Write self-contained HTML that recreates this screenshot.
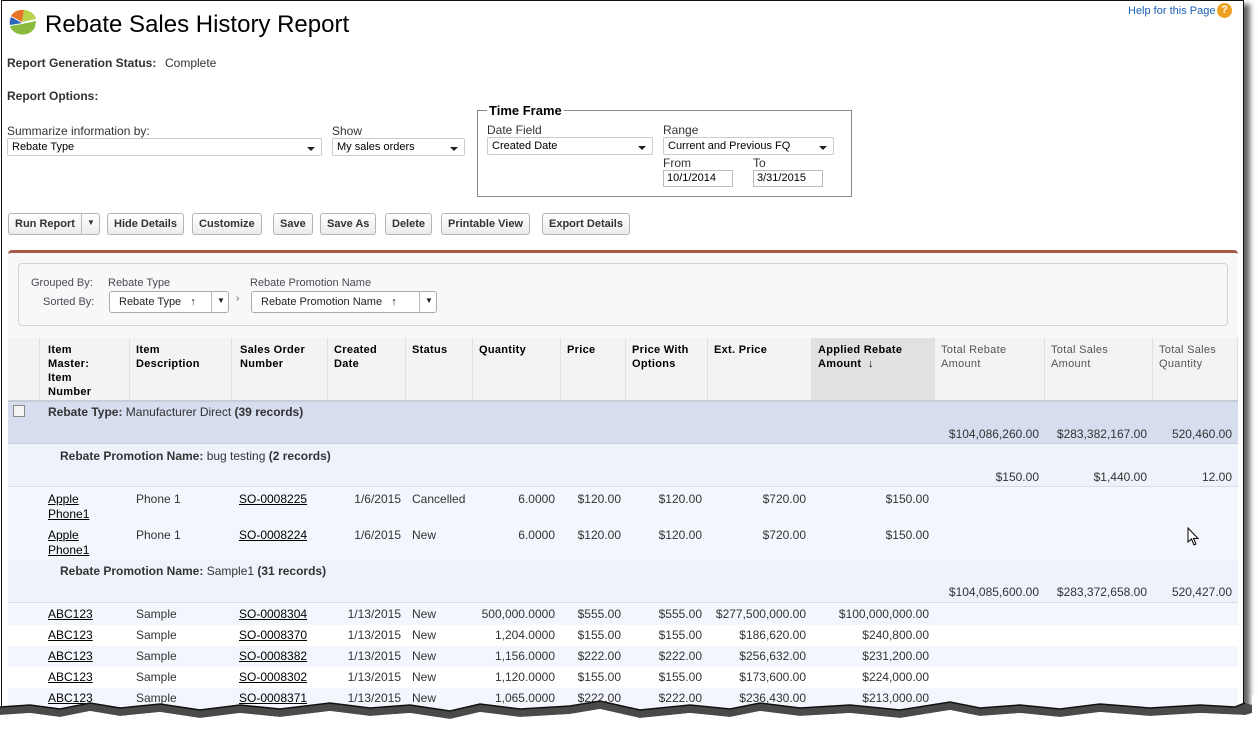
<!DOCTYPE html>
<html><head><meta charset="utf-8">
<style>
*{margin:0;padding:0;box-sizing:border-box}
body{width:1258px;height:733px;background:#fff;font-family:"Liberation Sans",Arial,sans-serif;font-size:12px;color:#333;position:relative;overflow:hidden}
.a{position:absolute;white-space:nowrap}
.frame{position:absolute;left:1px;top:0;width:1243px;height:720px;border:1px solid #111;border-bottom:none;background:#fff;box-shadow:6px 4px 5px #666}
.b{font-weight:bold;color:#333}
.sel{position:absolute;height:18px;border:1px solid #ccc;background:#fff;font-size:11px;color:#000;padding:2px 4px;border-radius:2px}
.sel:after{content:"";position:absolute;right:6px;top:8px;border-left:4px solid transparent;border-right:4px solid transparent;border-top:4px solid #222}
.btn{position:absolute;top:213px;height:22px;border:1px solid #b5b5b5;border-radius:3px;background:linear-gradient(#fff,#ececec);font-weight:bold;font-size:11px;color:#333;padding:4px 6px;white-space:nowrap}
.inp{position:absolute;height:17px;border:1px solid #bbb;font-size:11px;color:#000;padding:1px 3px;background:#fff}
.h{position:absolute;top:338px;height:63px;font-size:11px;font-weight:bold;color:#000;padding:5px 6px;line-height:14px;border-right:1px solid #e0e0e0;background:#f2f3f3;letter-spacing:0.3px}
.hn{font-weight:normal;color:#555}
.row{position:absolute;left:8px;width:1230px}
.c{position:absolute;font-size:12px;color:#333;white-space:nowrap}
.r{text-align:right}
u{color:#000}
</style></head><body>
<div class="frame"></div>
<svg class="a" style="left:7px;top:7px" width="32" height="32" viewBox="0 0 32 32">
<path d="M15 15 L4 9 A13 13 0 0 1 17 3 Z" fill="#e8742a"/>
<path d="M15 15 L17 3 A13 12 0 0 1 29 12 Z" fill="#b8d24a"/>
<path d="M15 16 L4 10 A13 13 0 0 0 3 18 Z" fill="#2b64b8"/>
<path d="M15 17 L3 19 A13 11 0 0 0 28 20 L29 14 Z" fill="#8bbb3c"/>
</svg>
<div class="a" style="left:45px;top:11px;font-size:24px;color:#000">Rebate Sales History Report</div>
<div class="a" style="left:1128px;top:5px;font-size:11px;color:#1a5fb4">Help for this Page</div>
<div class="a" style="left:1217px;top:3px;width:15px;height:15px;border-radius:50%;background:#f0a020;color:#fff;font-weight:bold;font-size:11px;text-align:center;line-height:15px">?</div>

<div class="a b" style="left:7px;top:56px;font-size:12px">Report Generation Status:</div>
<div class="a" style="left:165px;top:56px;font-size:12px">Complete</div>
<div class="a b" style="left:7px;top:89px">Report Options:</div>

<div class="a" style="left:7px;top:124px;font-size:12px">Summarize information by:</div>
<div class="sel" style="left:7px;top:138px;width:315px">Rebate Type</div>
<div class="a" style="left:332px;top:124px">Show</div>
<div class="sel" style="left:332px;top:138px;width:133px">My sales orders</div>

<div class="a" style="left:477px;top:110px;width:375px;height:87px;border:1px solid #888"></div>
<div class="a" style="left:487px;top:103px;background:#fff;padding:0 2px;font-weight:bold;font-size:13px;color:#000">Time Frame</div>
<div class="a" style="left:487px;top:123px">Date Field</div>
<div class="sel" style="left:487px;top:137px;width:166px">Created Date</div>
<div class="a" style="left:663px;top:123px">Range</div>
<div class="sel" style="left:663px;top:137px;width:171px">Current and Previous FQ</div>
<div class="a" style="left:663px;top:156px">From</div>
<div class="a" style="left:753px;top:156px">To</div>
<div class="inp" style="left:663px;top:170px;width:70px">10/1/2014</div>
<div class="inp" style="left:753px;top:170px;width:70px">3/31/2015</div>

<div class="btn" style="left:8px;width:92px">Run Report <span style="position:absolute;left:72px;top:0;height:20px;border-left:1px solid #bbb;padding:4px 0 0 5px;font-size:8px">▼</span></div>
<div class="btn" style="left:107px">Hide Details</div>
<div class="btn" style="left:192px">Customize</div>
<div class="btn" style="left:273px">Save</div>
<div class="btn" style="left:320px">Save As</div>
<div class="btn" style="left:385px">Delete</div>
<div class="btn" style="left:441px">Printable View</div>
<div class="btn" style="left:542px">Export Details</div>

<div class="a" style="left:8px;top:250px;width:1230px;height:470px;background:#f8f8f8;border-top:3px solid #a85a4a;border-radius:4px 4px 0 0"></div>
<div class="a" style="left:18px;top:263px;width:1210px;height:63px;border:1px solid #d4d4d4;border-radius:4px;background:#f8f8f8"></div>
<div class="a" style="left:31px;top:277px;font-size:11px;color:#4a4a56">Grouped By:</div>
<div class="a" style="left:108px;top:277px;font-size:11px;color:#4a4a56">Rebate Type</div>
<div class="a" style="left:250px;top:277px;font-size:11px;color:#4a4a56">Rebate Promotion Name</div>
<div class="a" style="left:43px;top:296px;font-size:11px;color:#4a4a56">Sorted By:</div>
<div class="a" style="left:109px;top:291px;width:120px;height:22px;border:1px solid #aaa;border-radius:3px;background:#fff;font-size:11px;color:#222;padding:4px 9px">Rebate Type &nbsp;&nbsp;↑<span style="position:absolute;left:101px;top:0;height:20px;border-left:1px solid #bbb;padding:4px 0 0 5px;font-size:8px">▼</span></div>
<div class="a" style="left:236px;top:293px;font-size:10px;color:#555">›</div>
<div class="a" style="left:251px;top:291px;width:186px;height:22px;border:1px solid #aaa;border-radius:3px;background:#fff;font-size:11px;color:#222;padding:4px 9px">Rebate Promotion Name &nbsp;&nbsp;↑<span style="position:absolute;left:167px;top:0;height:20px;border-left:1px solid #bbb;padding:4px 0 0 5px;font-size:8px">▼</span></div>

<div class="h" style="left:8px;width:32px"></div>
<div class="h" style="left:40px;width:90px;padding-left:8px">Item<br>Master:<br>Item<br>Number</div>
<div class="h" style="left:130px;width:102px">Item<br>Description</div>
<div class="h" style="left:232px;width:96px;padding-left:8px">Sales Order<br>Number</div>
<div class="h" style="left:328px;width:78px">Created<br>Date</div>
<div class="h" style="left:406px;width:67px">Status</div>
<div class="h" style="left:473px;width:88px">Quantity</div>
<div class="h" style="left:561px;width:65px">Price</div>
<div class="h" style="left:626px;width:82px">Price With<br>Options</div>
<div class="h" style="left:708px;width:104px">Ext. Price</div>
<div class="h" style="left:812px;width:123px;background:#dfe1e3">Applied Rebate<br>Amount &nbsp;↓</div>
<div class="h hn" style="left:935px;width:110px">Total Rebate<br>Amount</div>
<div class="h hn" style="left:1045px;width:108px">Total Sales<br>Amount</div>
<div class="h hn" style="left:1153px;width:85px">Total Sales<br>Quantity</div>
<div class="a" style="left:8px;top:400px;width:1230px;height:2px;background:#c8ccd6"></div>

<div class="row" style="top:402px;height:42px;background:#d5ddef;border-bottom:1px solid #c8d0e0"></div>
<div class="a" style="left:13px;top:405px;width:12px;height:12px;border:1px solid #888;background:#f4f4f4"></div>
<div class="c" style="left:48px;top:405px"><b>Rebate Type:</b> Manufacturer Direct <b>(39 records)</b></div>
<div class="c r" style="left:900px;width:139px;top:427px">$104,086,260.00</div>
<div class="c r" style="left:1040px;width:107px;top:427px">$283,382,167.00</div>
<div class="c r" style="left:1150px;width:82px;top:427px">520,460.00</div>

<div class="row" style="top:444px;height:43px;background:#eef2fa;border-bottom:1px solid #d8dce6"></div>
<div class="c" style="left:60px;top:449px"><b>Rebate Promotion Name:</b> bug testing <b>(2 records)</b></div>
<div class="c r" style="left:900px;width:139px;top:470px">$150.00</div>
<div class="c r" style="left:1040px;width:107px;top:470px">$1,440.00</div>
<div class="c r" style="left:1150px;width:82px;top:470px">12.00</div>

<div class="row" style="top:488px;height:72px;background:#f3f6fc"></div>
<div class="c" style="left:48px;top:492px;line-height:15px"><u>Apple<br>Phone1</u></div>
<div class="c" style="left:136px;top:492px">Phone 1</div>
<div class="c" style="left:239px;top:492px"><u>SO-0008225</u></div>
<div class="c r" style="left:330px;width:71px;top:492px">1/6/2015</div>
<div class="c" style="left:412px;top:492px">Cancelled</div>
<div class="c r" style="left:470px;width:85px;top:492px">6.0000</div>
<div class="c r" style="left:560px;width:61px;top:492px">$120.00</div>
<div class="c r" style="left:625px;width:77px;top:492px">$120.00</div>
<div class="c r" style="left:705px;width:101px;top:492px">$720.00</div>
<div class="c r" style="left:810px;width:119px;top:492px">$150.00</div>

<div class="c" style="left:48px;top:528px;line-height:15px"><u>Apple<br>Phone1</u></div>
<div class="c" style="left:136px;top:528px">Phone 1</div>
<div class="c" style="left:239px;top:528px"><u>SO-0008224</u></div>
<div class="c r" style="left:330px;width:71px;top:528px">1/6/2015</div>
<div class="c" style="left:412px;top:528px">New</div>
<div class="c r" style="left:470px;width:85px;top:528px">6.0000</div>
<div class="c r" style="left:560px;width:61px;top:528px">$120.00</div>
<div class="c r" style="left:625px;width:77px;top:528px">$120.00</div>
<div class="c r" style="left:705px;width:101px;top:528px">$720.00</div>
<div class="c r" style="left:810px;width:119px;top:528px">$150.00</div>
<svg class="a" style="left:1187px;top:527px" width="14" height="20" viewBox="0 0 14 20"><path d="M1 1 L1 15 L4.5 12 L7 18 L9 17 L6.5 11.5 L11 11.5 Z" fill="#fff" stroke="#000" stroke-width="1"/></svg>

<div class="row" style="top:560px;height:43px;background:#eef2fa;border-bottom:1px solid #d8dce6"></div>
<div class="c" style="left:60px;top:564px"><b>Rebate Promotion Name:</b> Sample1 <b>(31 records)</b></div>
<div class="c r" style="left:900px;width:139px;top:585px">$104,085,600.00</div>
<div class="c r" style="left:1040px;width:107px;top:585px">$283,372,658.00</div>
<div class="c r" style="left:1150px;width:82px;top:585px">520,427.00</div>

<div class="row" style="top:604px;height:21px;background:#f3f6fc"></div>
<div class="row" style="top:625px;height:21px;background:#fff"></div>
<div class="row" style="top:646px;height:21px;background:#f3f6fc"></div>
<div class="row" style="top:667px;height:21px;background:#fff"></div>
<div class="row" style="top:688px;height:32px;background:#f3f6fc"></div>

<div class="c" style="left:48px;top:607px"><u>ABC123</u></div><div class="c" style="left:136px;top:607px">Sample</div><div class="c" style="left:239px;top:607px"><u>SO-0008304</u></div><div class="c r" style="left:330px;width:71px;top:607px">1/13/2015</div><div class="c" style="left:412px;top:607px">New</div><div class="c r" style="left:470px;width:85px;top:607px">500,000.0000</div><div class="c r" style="left:560px;width:61px;top:607px">$555.00</div><div class="c r" style="left:625px;width:77px;top:607px">$555.00</div><div class="c r" style="left:705px;width:101px;top:607px">$277,500,000.00</div><div class="c r" style="left:810px;width:119px;top:607px">$100,000,000.00</div>
<div class="c" style="left:48px;top:628px"><u>ABC123</u></div><div class="c" style="left:136px;top:628px">Sample</div><div class="c" style="left:239px;top:628px"><u>SO-0008370</u></div><div class="c r" style="left:330px;width:71px;top:628px">1/13/2015</div><div class="c" style="left:412px;top:628px">New</div><div class="c r" style="left:470px;width:85px;top:628px">1,204.0000</div><div class="c r" style="left:560px;width:61px;top:628px">$155.00</div><div class="c r" style="left:625px;width:77px;top:628px">$155.00</div><div class="c r" style="left:705px;width:101px;top:628px">$186,620.00</div><div class="c r" style="left:810px;width:119px;top:628px">$240,800.00</div>
<div class="c" style="left:48px;top:649px"><u>ABC123</u></div><div class="c" style="left:136px;top:649px">Sample</div><div class="c" style="left:239px;top:649px"><u>SO-0008382</u></div><div class="c r" style="left:330px;width:71px;top:649px">1/13/2015</div><div class="c" style="left:412px;top:649px">New</div><div class="c r" style="left:470px;width:85px;top:649px">1,156.0000</div><div class="c r" style="left:560px;width:61px;top:649px">$222.00</div><div class="c r" style="left:625px;width:77px;top:649px">$222.00</div><div class="c r" style="left:705px;width:101px;top:649px">$256,632.00</div><div class="c r" style="left:810px;width:119px;top:649px">$231,200.00</div>
<div class="c" style="left:48px;top:670px"><u>ABC123</u></div><div class="c" style="left:136px;top:670px">Sample</div><div class="c" style="left:239px;top:670px"><u>SO-0008302</u></div><div class="c r" style="left:330px;width:71px;top:670px">1/13/2015</div><div class="c" style="left:412px;top:670px">New</div><div class="c r" style="left:470px;width:85px;top:670px">1,120.0000</div><div class="c r" style="left:560px;width:61px;top:670px">$155.00</div><div class="c r" style="left:625px;width:77px;top:670px">$155.00</div><div class="c r" style="left:705px;width:101px;top:670px">$173,600.00</div><div class="c r" style="left:810px;width:119px;top:670px">$224,000.00</div>
<div class="c" style="left:48px;top:691px"><u>ABC123</u></div><div class="c" style="left:136px;top:691px">Sample</div><div class="c" style="left:239px;top:691px"><u>SO-0008371</u></div><div class="c r" style="left:330px;width:71px;top:691px">1/13/2015</div><div class="c" style="left:412px;top:691px">New</div><div class="c r" style="left:470px;width:85px;top:691px">1,065.0000</div><div class="c r" style="left:560px;width:61px;top:691px">$222.00</div><div class="c r" style="left:625px;width:77px;top:691px">$222.00</div><div class="c r" style="left:705px;width:101px;top:691px">$236,430.00</div><div class="c r" style="left:810px;width:119px;top:691px">$213,000.00</div>

<svg class="a" style="left:0;top:695px" width="1258" height="38" viewBox="0 0 1258 38">
<path d="M0 12 L30 10 L60 14 L90 8 L120 13 L160 9 L200 15 L240 10 L280 14 L330 8 L370 13 L410 10 L450 16 L480 9 L520 14 L570 11 L600 6 L640 15 L690 10 L730 14 L760 8 L800 13 L850 10 L900 15 L950 7 L980 13 L1020 10 L1060 14 L1100 9 L1150 13 L1200 10 L1235 12 L1245 8 L1252 10 L1252 18 L1245 20 L1200 18 L1150 21 L1100 17 L1060 22 L1020 18 L980 21 L950 15 L900 23 L850 18 L800 21 L760 16 L730 22 L690 18 L640 23 L600 14 L570 19 L520 22 L480 17 L450 24 L410 18 L370 21 L330 16 L280 22 L240 18 L200 23 L160 17 L120 21 L90 16 L60 22 L30 18 L0 20 Z" fill="#4a4a4a"/>
<path d="M0 12 L30 10 L60 14 L90 8 L120 13 L160 9 L200 15 L240 10 L280 14 L330 8 L370 13 L410 10 L450 16 L480 9 L520 14 L570 11 L600 6 L640 15 L690 10 L730 14 L760 8 L800 13 L850 10 L900 15 L950 7 L980 13 L1020 10 L1060 14 L1100 9 L1150 13 L1200 10 L1235 12 L1245 8 L1245 0 L1258 0 L1258 38 L0 38 Z" fill="none"/>
<path d="M0 20 L30 18 L60 22 L90 16 L120 21 L160 17 L200 23 L240 18 L280 22 L330 16 L370 21 L410 18 L450 24 L480 17 L520 22 L570 19 L600 14 L640 23 L690 18 L730 22 L760 16 L800 21 L850 18 L900 23 L950 15 L980 21 L1020 18 L1060 22 L1100 17 L1150 21 L1200 18 L1245 20 L1252 18 L1258 18 L1258 38 L0 38 Z" fill="#fff"/>
<path d="M0 12 L30 10 L60 14 L90 8 L120 13 L160 9 L200 15 L240 10 L280 14 L330 8 L370 13 L410 10 L450 16 L480 9 L520 14 L570 11 L600 6 L640 15 L690 10 L730 14 L760 8 L800 13 L850 10 L900 15 L950 7 L980 13 L1020 10 L1060 14 L1100 9 L1150 13 L1200 10 L1235 12 L1245 8" fill="none" stroke="#111" stroke-width="1.5"/>
<rect x="1252" y="0" width="6" height="38" fill="#fff"/>
</svg>
</body></html>
